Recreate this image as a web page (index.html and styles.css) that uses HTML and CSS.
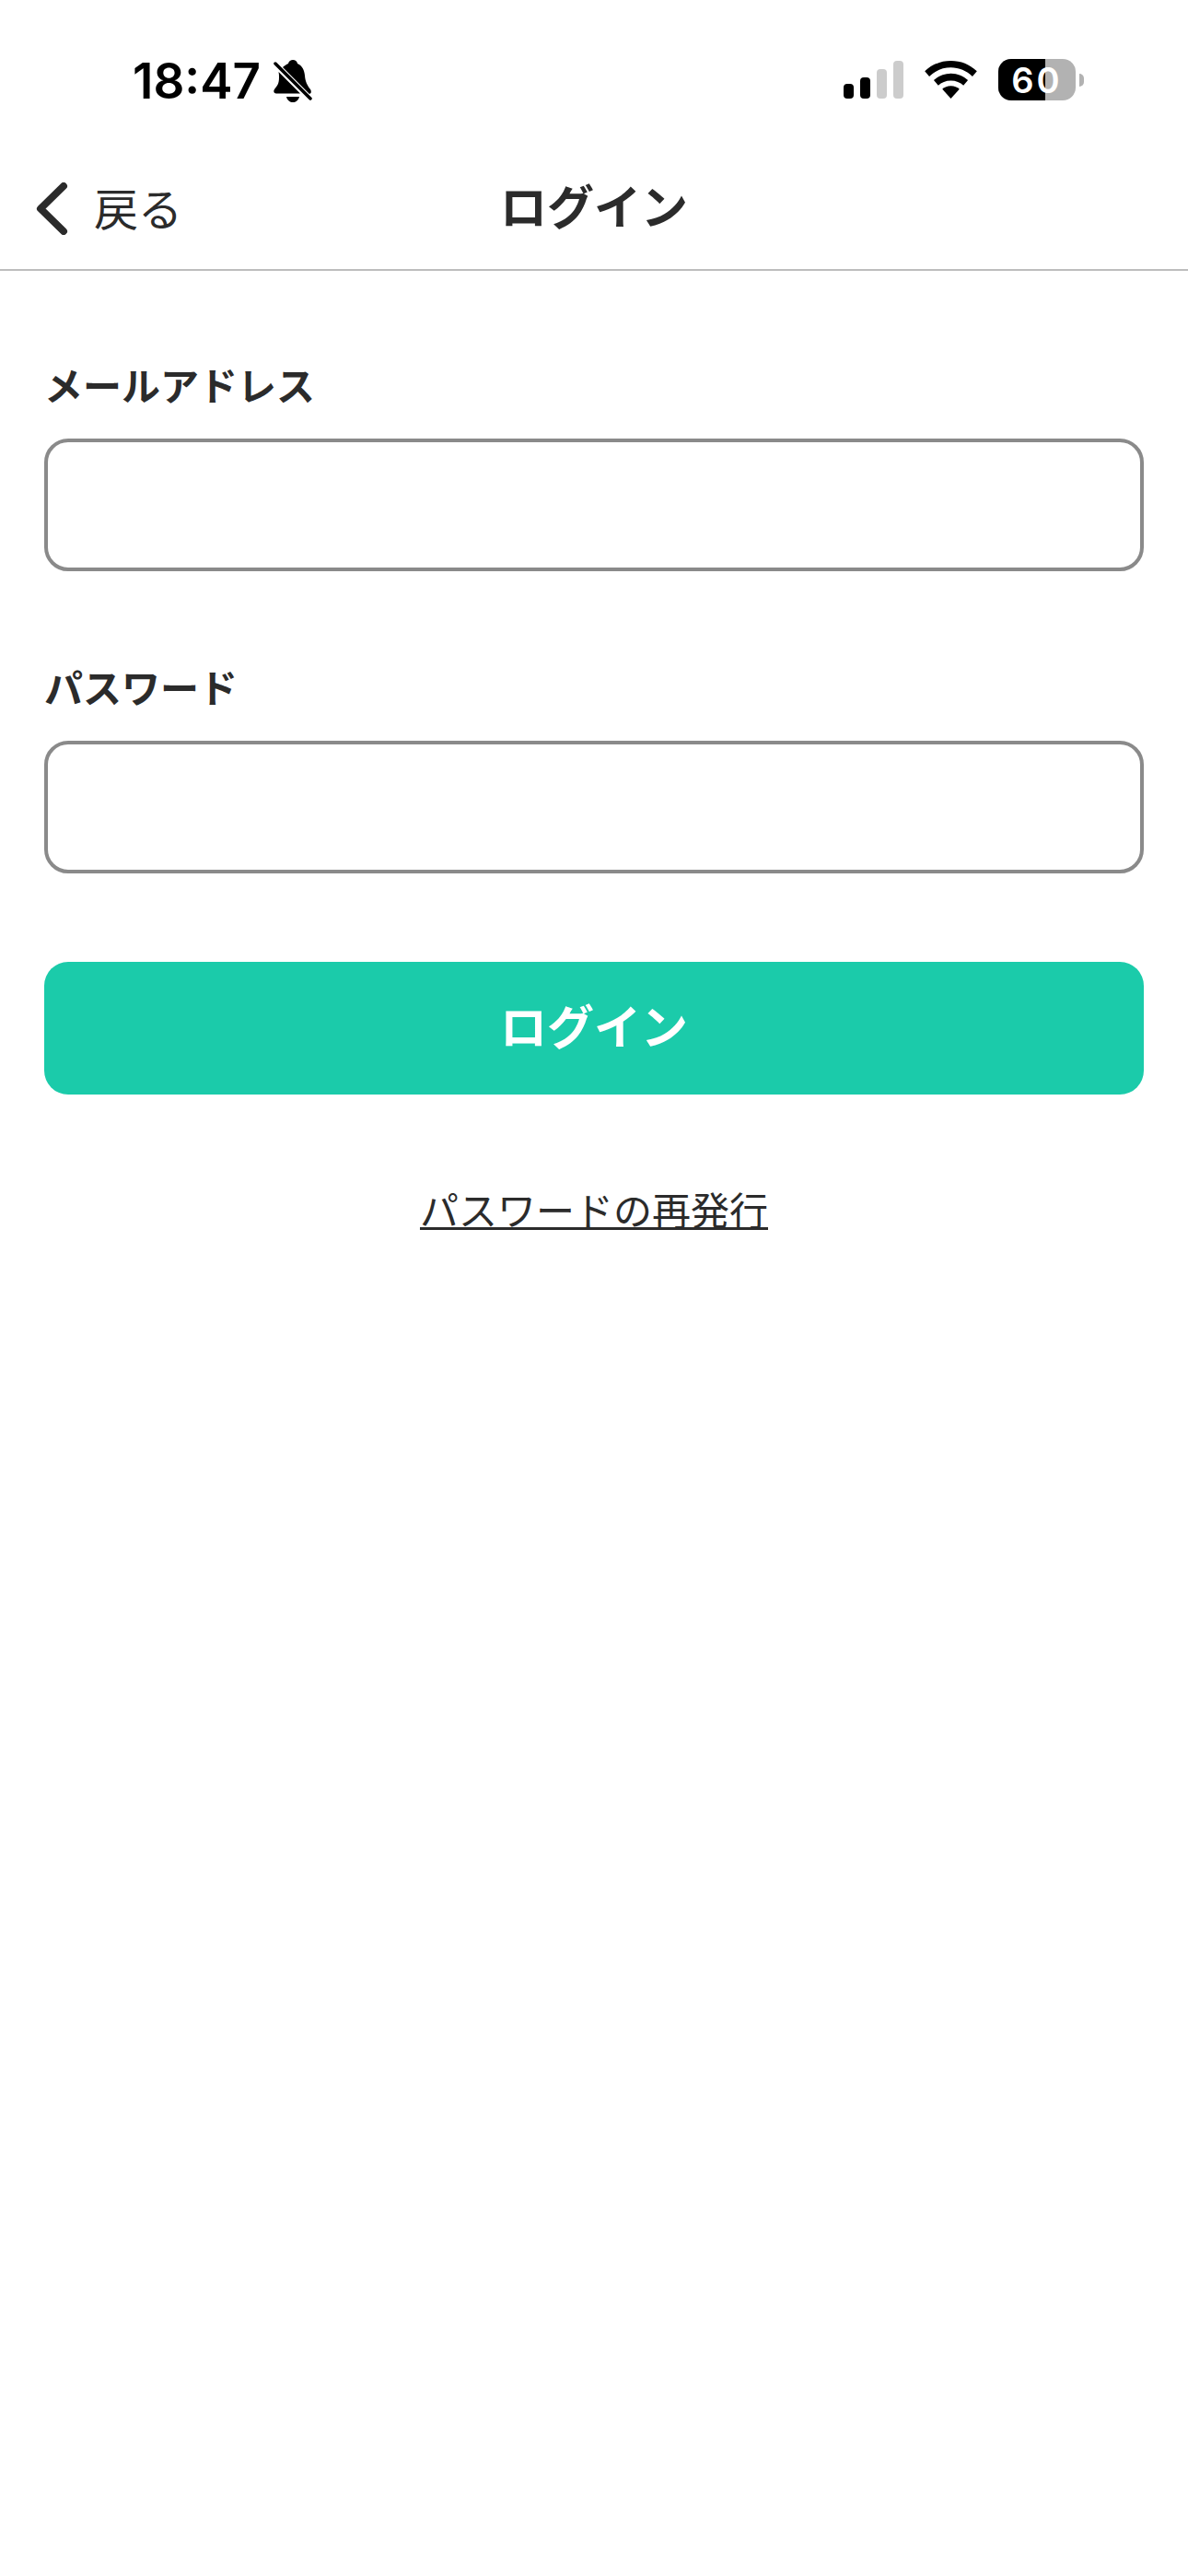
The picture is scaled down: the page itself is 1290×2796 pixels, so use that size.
FILE: index.html
```html
<!DOCTYPE html>
<html lang="ja">
<head>
  <meta charset="utf-8">
  <title>ログイン</title>
  <link rel="stylesheet" href="styles.css">
</head>
<body>
  <div class="statusbar">
    <div class="status-left">
      <span class="time">18:47</span>
      <svg class="bell" width="42" height="46" viewBox="0 0 42 46">
        <path d="M10 8C12 6 14 5 16 4 16.500 1.500 19 0 21 0c2.500 0 4.500 1.500 5 4 5 2 7.500 7 8 13 .5 7 3 11 6 15 1 1.500 1 3 .5 4L39 37z" fill="#000"/>
        <path d="M5.500 13L29 36.500H3C.5 36.500-.5 34 1 32c3-4 5-6 5-13 0-2 0-4-.5-6z" fill="#000"/>
        <path d="M14 40h14c-1 4-4 6-7 6s-6-2-7-6z" fill="#000"/>
        <path d="M2 4l38 38" stroke="#000" stroke-width="3.500" stroke-linecap="round"/>
      </svg>
    </div>
    <div class="status-right">
      <div class="signal">
        <span class="bar bar-1"></span>
        <span class="bar bar-2"></span>
        <span class="bar bar-3"></span>
        <span class="bar bar-4"></span>
      </div>
      <svg class="wifi" width="57" height="41" viewBox="0 0 58 42">
        <path d="M29 0c11 0 21 4 29 11.500l-5 6C46.500 11 38 7.500 29 7.500S11.500 11 5 17.500l-5-6C8 4 18 0 29 0z" fill="#000"/>
        <path d="M29 14c7.500 0 14 3 19 7.500l-5 6c-3.500-3.500-8.500-5.500-14-5.500s-10.500 2-14 5.500l-5-6C15 17 21.500 14 29 14z" fill="#000"/>
        <path d="M29 28c4 0 7 1.500 9.500 3.500L29 42l-9.500-10.500C22 29.500 25 28 29 28z" fill="#000"/>
      </svg>
      <div class="battery">
        <div class="battery-body">
          <span class="battery-level"></span>
          <span class="battery-num">60</span>
        </div>
        <span class="battery-cap"></span>
      </div>
    </div>
  </div>

  <header class="navbar">
    <a class="back">
      <svg class="chevron" width="38" height="57" viewBox="0 0 38 57">
        <path d="M33 4L8 28.500 33 53" fill="none" stroke="#2b2b2b" stroke-width="8" stroke-linecap="round" stroke-linejoin="round"/>
      </svg>
      <span class="back-text">戻る</span>
    </a>
    <h1 class="nav-title">ログイン</h1>
  </header>

  <main class="form">
    <div class="field">
      <label class="field-label">メールアドレス</label>
      <input class="field-input" type="text">
    </div>
    <div class="field">
      <label class="field-label">パスワード</label>
      <input class="field-input" type="password">
    </div>
    <button class="login-btn">ログイン</button>
    <a class="reissue">パスワードの再発行</a>
  </main>
</body>
</html>
```

FILE: styles.css
```css
* {
  box-sizing: border-box;
}

body {
  margin: 0;
  width: 1290px;
  height: 2796px;
  background: #fff;
  color: #2b2b2b;
  font-family: "Noto Sans CJK JP", "Noto Sans", sans-serif;
  overflow: hidden;
}

.statusbar {
  height: 176px;
  display: flex;
  justify-content: space-between;
  align-items: flex-start;
  padding: 64px 113px 0 144px;
}

.status-left {
  display: flex;
  align-items: center;
  gap: 14px;
  height: 47px;
}

.time {
  font-family: Inter, sans-serif;
  font-size: 53px;
  font-weight: 600;
  color: #000;
  line-height: 47px;
  padding-top: 2px;
}

.status-right {
  display: flex;
  align-items: center;
  gap: 23px;
  height: 45px;
}

.signal {
  display: flex;
  align-items: flex-end;
  gap: 7px;
  height: 41px;
}

.bar {
  width: 11px;
  border-radius: 4px;
  background: #000;
}

.bar-1 { height: 16px; }
.bar-2 { height: 23px; }
.bar-3 { height: 32px; background: #ccc; }
.bar-4 { height: 41px; background: #ccc; }

.battery {
  display: flex;
  align-items: center;
  gap: 4px;
}

.battery-body {
  position: relative;
  width: 84px;
  height: 45px;
  border-radius: 14px;
  background: #b2b2b2;
  overflow: hidden;
  display: flex;
  justify-content: center;
  align-items: center;
}

.battery-level {
  position: absolute;
  left: 0;
  top: 0;
  bottom: 0;
  width: 51px;
  background: #000;
}

.battery-num {
  position: relative;
  font-family: Inter, sans-serif;
  font-size: 38px;
  font-weight: 600;
  letter-spacing: 3px;
  color: #fff;
  line-height: 1;
}

.battery-cap {
  width: 5px;
  height: 14px;
  border-radius: 0 7px 7px 0;
  background: #b2b2b2;
}

.navbar {
  position: relative;
  height: 118px;
  border-bottom: 2px solid #bdbdbd;
  display: flex;
  align-items: center;
  justify-content: center;
  padding-bottom: 24px;
}

.back {
  position: absolute;
  left: 36px;
  top: 18px;
  display: flex;
  align-items: center;
  gap: 28px;
  font-size: 48px;
  line-height: 60px;
}

.back-text {
  padding-bottom: 4px;
}

.nav-title {
  margin: 0;
  font-size: 51px;
  font-weight: 700;
  line-height: 60px;
}

.form {
  padding: 94px 48px 0;
  display: flex;
  flex-direction: column;
}

.field {
  display: flex;
  flex-direction: column;
  gap: 30px;
  margin-bottom: 96px;
}

.field-label {
  font-size: 42px;
  font-weight: 700;
  line-height: 58px;
}

.field-input {
  height: 144px;
  border: 4px solid #8a8a8a;
  border-radius: 26px;
  background: #fff;
}

.login-btn {
  height: 144px;
  padding-bottom: 10px;
  border: none;
  border-radius: 26px;
  background: #1bcbaa;
  color: #fff;
  font-family: inherit;
  font-size: 51px;
  font-weight: 700;
}

.reissue {
  align-self: center;
  margin-top: 94px;
  font-size: 42px;
  line-height: 60px;
  text-decoration: underline;
  text-decoration-thickness: 3px;
}
```
